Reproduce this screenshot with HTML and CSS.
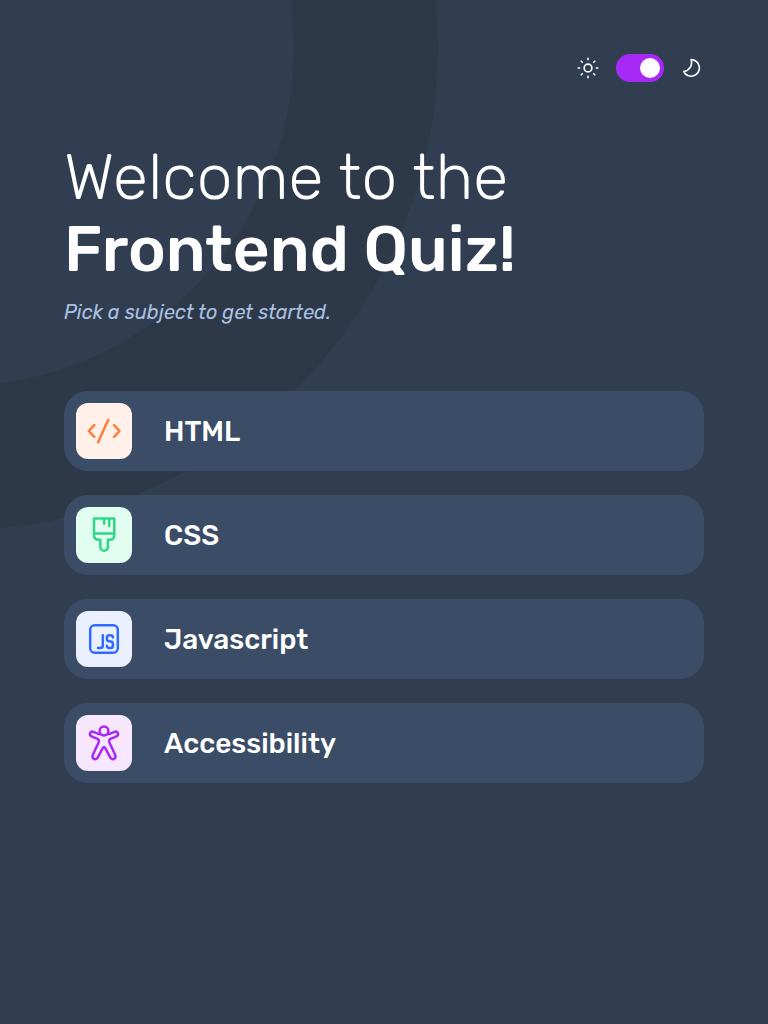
FILE: index.html
```
<!DOCTYPE html>
<html lang="en">
<head>
<meta charset="utf-8">
<title>Frontend Quiz</title>
<link rel="stylesheet" href="styles.css">
</head>
<body>
<svg class="backdrop" viewBox="0 0 768 1024" aria-hidden="true"><circle cx="-46" cy="46.5" r="412" fill="none" stroke="#2d3949" stroke-width="144"/></svg>
<div class="page">
  <header class="theme">
    <svg class="theme-icon" viewBox="0 0 24 24" fill="none" stroke="#fff" stroke-width="1.6" stroke-linecap="round"><circle cx="12" cy="12" r="3.9"/><path d="M12 2.2v1.4M12 20.4v1.4M2.2 12h1.4M20.4 12h1.4M5.3 5.3l1 1M17.7 17.7l1 1M5.3 18.7l1-1M17.7 6.3l1-1"/></svg>
    <button class="switch" aria-label="Toggle theme"><span class="knob"></span></button>
    <svg class="theme-icon" viewBox="0 0 24 24" fill="none" stroke="#fff" stroke-width="1.6" stroke-linejoin="round"><path d="M11.2 3.6A8.3 8.3 0 1 1 3.7 15.6C9.5 14.5 12.8 9.5 11.2 3.6Z"/></svg>
  </header>
  <main>
    <h1 class="title"><span class="title-light">Welcome to the</span><span class="title-bold">Frontend Quiz!</span></h1>
    <p class="subtitle">Pick a subject to get started.</p>
    <div class="subjects">
      <button class="subject"><span class="tile tile-html"><svg viewBox="0 0 56 56"><path d="M18.3 22.2 12.8 28l5.5 5.8M38 22.2l5.5 5.8-5.5 5.8M32.3 16.8 22 39.3"/></svg></span><span class="name">HTML</span></button>
      <button class="subject"><span class="tile tile-css"><svg viewBox="0 0 56 56"><path d="M18 11.5h20.3v16.7q0 4.5-4.5 4.5h-1.9v7.3a3.8 3.8 0 0 1-7.6 0v-7.3h-1.8q-4.5 0-4.5-4.5ZM18 26.5h20.3M28.2 12v4.7M33.2 12v7"/></svg></span><span class="name">CSS</span></button>
      <button class="subject"><span class="tile tile-js"><svg viewBox="0 0 56 56"><rect x="14.2" y="14.2" width="27.6" height="27.6" rx="4.5"/><path d="M26.8 24.2v10.5q0 2.3-2.3 2.3H22M36.9 26.5q0-2.3-2.3-2.3h-1.2q-2.5 0-2.5 2.3v1.4q0 2.2 2.5 2.4l1.1.1q2.4.2 2.4 2.4v1.9q0 2.3-2.4 2.3h-1.2q-2.4 0-2.4-2.2"/></svg></span><span class="name">Javascript</span></button>
      <button class="subject"><span class="tile tile-a11y"><svg viewBox="0 0 56 56"><circle cx="28" cy="16" r="4.4"/><path d="M23.8 19.3 17.3 16.8C14 15.5 12.7 20.2 15.6 21.4L21.6 23.9Q23.2 24.6 22.7 27.3L16.9 39.7C15.2 43.8 20 45.7 21.8 42.4L26.6 33.3Q28 30.8 29.4 33.3L34.2 42.4C36 45.7 40.8 43.8 39.1 39.7L33.3 27.3Q32.8 24.6 34.4 23.9L40.4 21.4C43.3 20.2 42 15.5 38.7 16.8L32.2 19.3"/></svg></span><span class="name">Accessibility</span></button>
    </div>
  </main>
</div>
</body>
</html>
```
FILE: styles.css
```
* { box-sizing: border-box; }
body { margin: 0; min-height: 1024px; background: #313e51; color: #fff; font-family: Rubik, Roboto, sans-serif; }
.backdrop { position: absolute; top: 0; left: 0; width: 768px; height: 1024px; z-index: -1; }
.page { padding: 54px 64px 0; }
.theme { display: flex; justify-content: flex-end; align-items: center; gap: 16px; height: 28px; }
.theme-icon { width: 24px; height: 24px; }
.switch { display: flex; justify-content: flex-end; width: 48px; height: 28px; padding: 4px; border: 0; border-radius: 14px; background: #a729f5; }
.knob { width: 20px; height: 20px; border-radius: 50%; background: #fff; }
.title { display: flex; flex-direction: column; margin: 59px 0 0; font-size: 64px; line-height: 72px; white-space: nowrap; }
.title-light { font-weight: 300; }
.title-bold { font-weight: 500; }
.subtitle { margin: 12px 0 0; color: #abc1e1; font-size: 20px; font-style: italic; line-height: 30px; white-space: nowrap; }
.subjects { display: flex; flex-direction: column; gap: 24px; margin-top: 64px; }
.subject { display: flex; align-items: center; gap: 32px; height: 80px; padding: 12px; border: 0; border-radius: 24px; background: #3b4d66; color: #fff; font: 500 28px/28px Rubik, Roboto, sans-serif; text-align: left; }
.tile { width: 56px; height: 56px; border-radius: 12px; }
.tile svg { display: block; width: 56px; height: 56px; fill: none; stroke-width: 2.5; stroke-linecap: round; stroke-linejoin: round; }
.tile-html { background: #fff1e9; stroke: #ff7e35; }
.tile-css { background: #e0fdef; stroke: #2fd887; }
.tile-js { background: #ebf0ff; stroke: #306aff; }
.tile-a11y { background: #f6e7ff; stroke: #a729f5; }
.name { padding-top: 2px; }
```
